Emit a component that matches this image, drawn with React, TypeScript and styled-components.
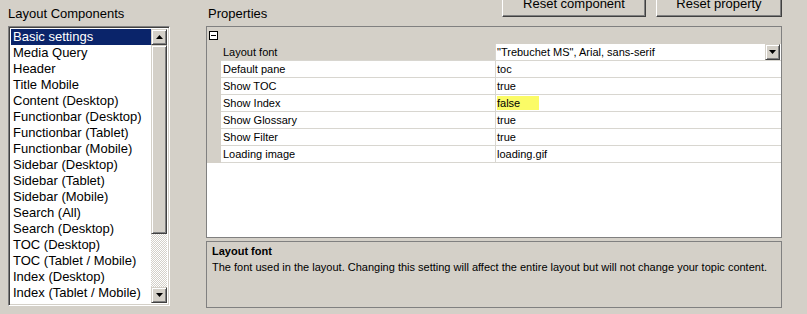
import React from "react";
import styled, { createGlobalStyle } from "styled-components";

const Global = createGlobalStyle`
  html, body { margin: 0; padding: 0; background: #d4d0c8; overflow: hidden; }
  body { font-family: "Liberation Sans", Arial, sans-serif; color: #000; }
`;

const Page = styled.div`
  display: flex;
  width: 807px;
  height: 314px;
  background: #d4d0c8;
  overflow: hidden;
`;

const LeftCol = styled.div`
  display: flex;
  flex-direction: column;
  width: 162px;
  margin-left: 8px;
`;

const GroupLabel = styled.div<{ $indent?: number }>`
  height: 26px;
  line-height: 28px;
  font-size: 13px;
  padding-left: ${(p) => p.$indent ?? 0}px;
  white-space: nowrap;
`;

const ListBox = styled.div`
  display: flex;
  height: 280px;
  box-sizing: border-box;
  border-style: solid;
  border-width: 1px;
  border-color: #808080 #ffffff #ffffff #808080;
  box-shadow: inset 1px 1px 0 #404040, inset -1px -1px 0 #d4d0c8;
  padding: 2px;
  background: #fff;
`;

const Items = styled.div`
  flex: 1;
  overflow: hidden;
  background: #fff;
`;

const Item = styled.div<{ $selected?: boolean }>`
  height: 16px;
  line-height: 16px;
  font-size: 13px;
  padding-left: 2px;
  white-space: nowrap;
  background: ${(p) => (p.$selected ? "#0a246a" : "transparent")};
  color: ${(p) => (p.$selected ? "#fff" : "#000")};
`;

const ScrollBar = styled.div`
  width: 16px;
  display: flex;
  flex-direction: column;
  background: repeating-conic-gradient(#d4d0c8 0 25%, #ffffff 0 50%) 0 0 / 2px 2px;
`;

const Raised = styled.div<{ $h?: number; $w?: number }>`
  box-sizing: border-box;
  width: ${(p) => (p.$w ? `${p.$w}px` : "100%")};
  height: ${(p) => p.$h ?? 16}px;
  flex: none;
  background: #d4d0c8;
  border-style: solid;
  border-width: 1px;
  border-color: #d4d0c8 #404040 #404040 #d4d0c8;
  box-shadow: inset 1px 1px 0 #ffffff, inset -1px -1px 0 #808080;
  display: flex;
  align-items: center;
  justify-content: center;
`;

const Spacer = styled.div`
  flex: 1;
`;

const Arrow = ({ down }: { down?: boolean }) => (
  <svg width="7" height="4" viewBox="0 0 7 4">
    <path d={down ? "M0 0H7L3.5 4Z" : "M0 4H7L3.5 0Z"} fill="#000" />
  </svg>
);

const RightCol = styled.div`
  display: flex;
  flex-direction: column;
  margin-left: 36px;
  width: 576px;
`;

const Header = styled.div`
  display: flex;
  height: 26px;
  align-items: flex-start;
`;

const ButtonRow = styled.div`
  margin-left: auto;
  display: flex;
  gap: 10px;
  margin-top: -8px;
`;

const Button = styled.div<{ $w: number }>`
  box-sizing: border-box;
  width: ${(p) => p.$w}px;
  height: 25px;
  background: #d4d0c8;
  border-style: solid;
  border-width: 1px;
  border-color: #ffffff #404040 #404040 #ffffff;
  box-shadow: inset -1px -1px 0 #808080;
  font-size: 13px;
  text-align: center;
  line-height: 22px;
  white-space: nowrap;
`;

const GridPanel = styled.div`
  box-sizing: border-box;
  height: 212px;
  border: 1px solid #808080;
  background: #fff;
  display: flex;
  flex-direction: column;
`;

const CategoryRow = styled.div`
  height: 17px;
  background: #d4d0c8;
  display: flex;
  align-items: center;
  padding-left: 2px;
`;

const Collapse = styled.div`
  box-sizing: border-box;
  width: 9px;
  height: 9px;
  border: 1px solid #000;
  background: #fff;
  display: flex;
  align-items: center;
  justify-content: center;
  &::after {
    content: "";
    width: 5px;
    height: 1px;
    background: #000;
  }
`;

const PropRow = styled.div`
  display: grid;
  grid-template-columns: 14px 275px 1fr;
  height: 17px;
  font-size: 11px;
`;

const Margin = styled.div`
  background: #d4d0c8;
`;

const LabelCell = styled.div<{ $active?: boolean }>`
  box-sizing: border-box;
  background: ${(p) => (p.$active ? "#d4d0c8" : "#fff")};
  border-bottom: 1px solid #d8d6d0;
  border-right: 1px solid #d8d6d0;
  padding-left: 2px;
  line-height: 16px;
  white-space: nowrap;
`;

const ValueCell = styled.div`
  box-sizing: border-box;
  border-bottom: 1px solid #d8d6d0;
  padding-left: 1px;
  line-height: 16px;
  display: flex;
  align-items: center;
  white-space: nowrap;
`;

const ValueText = styled.span<{ $highlight?: boolean }>`
  display: inline-block;
  line-height: 14px;
  padding-right: ${(p) => (p.$highlight ? "19px" : "0")};
  background: ${(p) => (p.$highlight ? "#fbfb66" : "transparent")};
`;

const DropButton = styled(Raised)`
  margin-left: auto;
  margin-right: 1px;
`;

const DescPanel = styled.div`
  box-sizing: border-box;
  margin-top: 3px;
  height: 67px;
  border: 1px solid #808080;
  background: #d4d0c8;
  padding: 2px 5px;
  font-size: 11px;
`;

const DescTitle = styled.div`
  font-weight: bold;
  line-height: 15px;
`;

const DescText = styled.div`
  line-height: 17px;
  white-space: nowrap;
`;

const components = [
  "Basic settings",
  "Media Query",
  "Header",
  "Title Mobile",
  "Content (Desktop)",
  "Functionbar (Desktop)",
  "Functionbar (Tablet)",
  "Functionbar (Mobile)",
  "Sidebar (Desktop)",
  "Sidebar (Tablet)",
  "Sidebar (Mobile)",
  "Search (All)",
  "Search (Desktop)",
  "TOC (Desktop)",
  "TOC (Tablet / Mobile)",
  "Index (Desktop)",
  "Index (Tablet / Mobile)",
  "Glossary (Desktop)",
];

const props: { label: string; value: string; dropdown?: boolean; highlight?: boolean }[] = [
  { label: "Layout font", value: "\"Trebuchet MS\", Arial, sans-serif", dropdown: true },
  { label: "Default pane", value: "toc" },
  { label: "Show TOC", value: "true" },
  { label: "Show Index", value: "false", highlight: true },
  { label: "Show Glossary", value: "true" },
  { label: "Show Filter", value: "true" },
  { label: "Loading image", value: "loading.gif" },
];

export default function App() {
  return (
    <>
      <Global />
      <Page>
        <LeftCol>
          <GroupLabel>Layout Components</GroupLabel>
          <ListBox>
            <Items>
              {components.map((c, i) => (
                <Item key={c} $selected={i === 0}>
                  {c}
                </Item>
              ))}
            </Items>
            <ScrollBar>
              <Raised>
                <Arrow />
              </Raised>
              <Raised $h={189} />
              <Spacer />
              <Raised>
                <Arrow down />
              </Raised>
            </ScrollBar>
          </ListBox>
        </LeftCol>
        <RightCol>
          <Header>
            <GroupLabel $indent={2}>Properties</GroupLabel>
            <ButtonRow>
              <Button $w={144}>Reset component</Button>
              <Button $w={126}>Reset property</Button>
            </ButtonRow>
          </Header>
          <GridPanel>
            <CategoryRow>
              <Collapse />
            </CategoryRow>
            {props.map((p, i) => (
              <PropRow key={p.label}>
                <Margin />
                <LabelCell $active={i === 0}>{p.label}</LabelCell>
                <ValueCell>
                  <ValueText $highlight={p.highlight}>{p.value}</ValueText>
                  {p.dropdown && (
                    <DropButton $w={15} $h={16}>
                      <Arrow down />
                    </DropButton>
                  )}
                </ValueCell>
              </PropRow>
            ))}
          </GridPanel>
          <DescPanel>
            <DescTitle>Layout font</DescTitle>
            <DescText>
              The font used in the layout. Changing this setting will affect the entire layout but will not change your topic content.
            </DescText>
          </DescPanel>
        </RightCol>
      </Page>
    </>
  );
}
